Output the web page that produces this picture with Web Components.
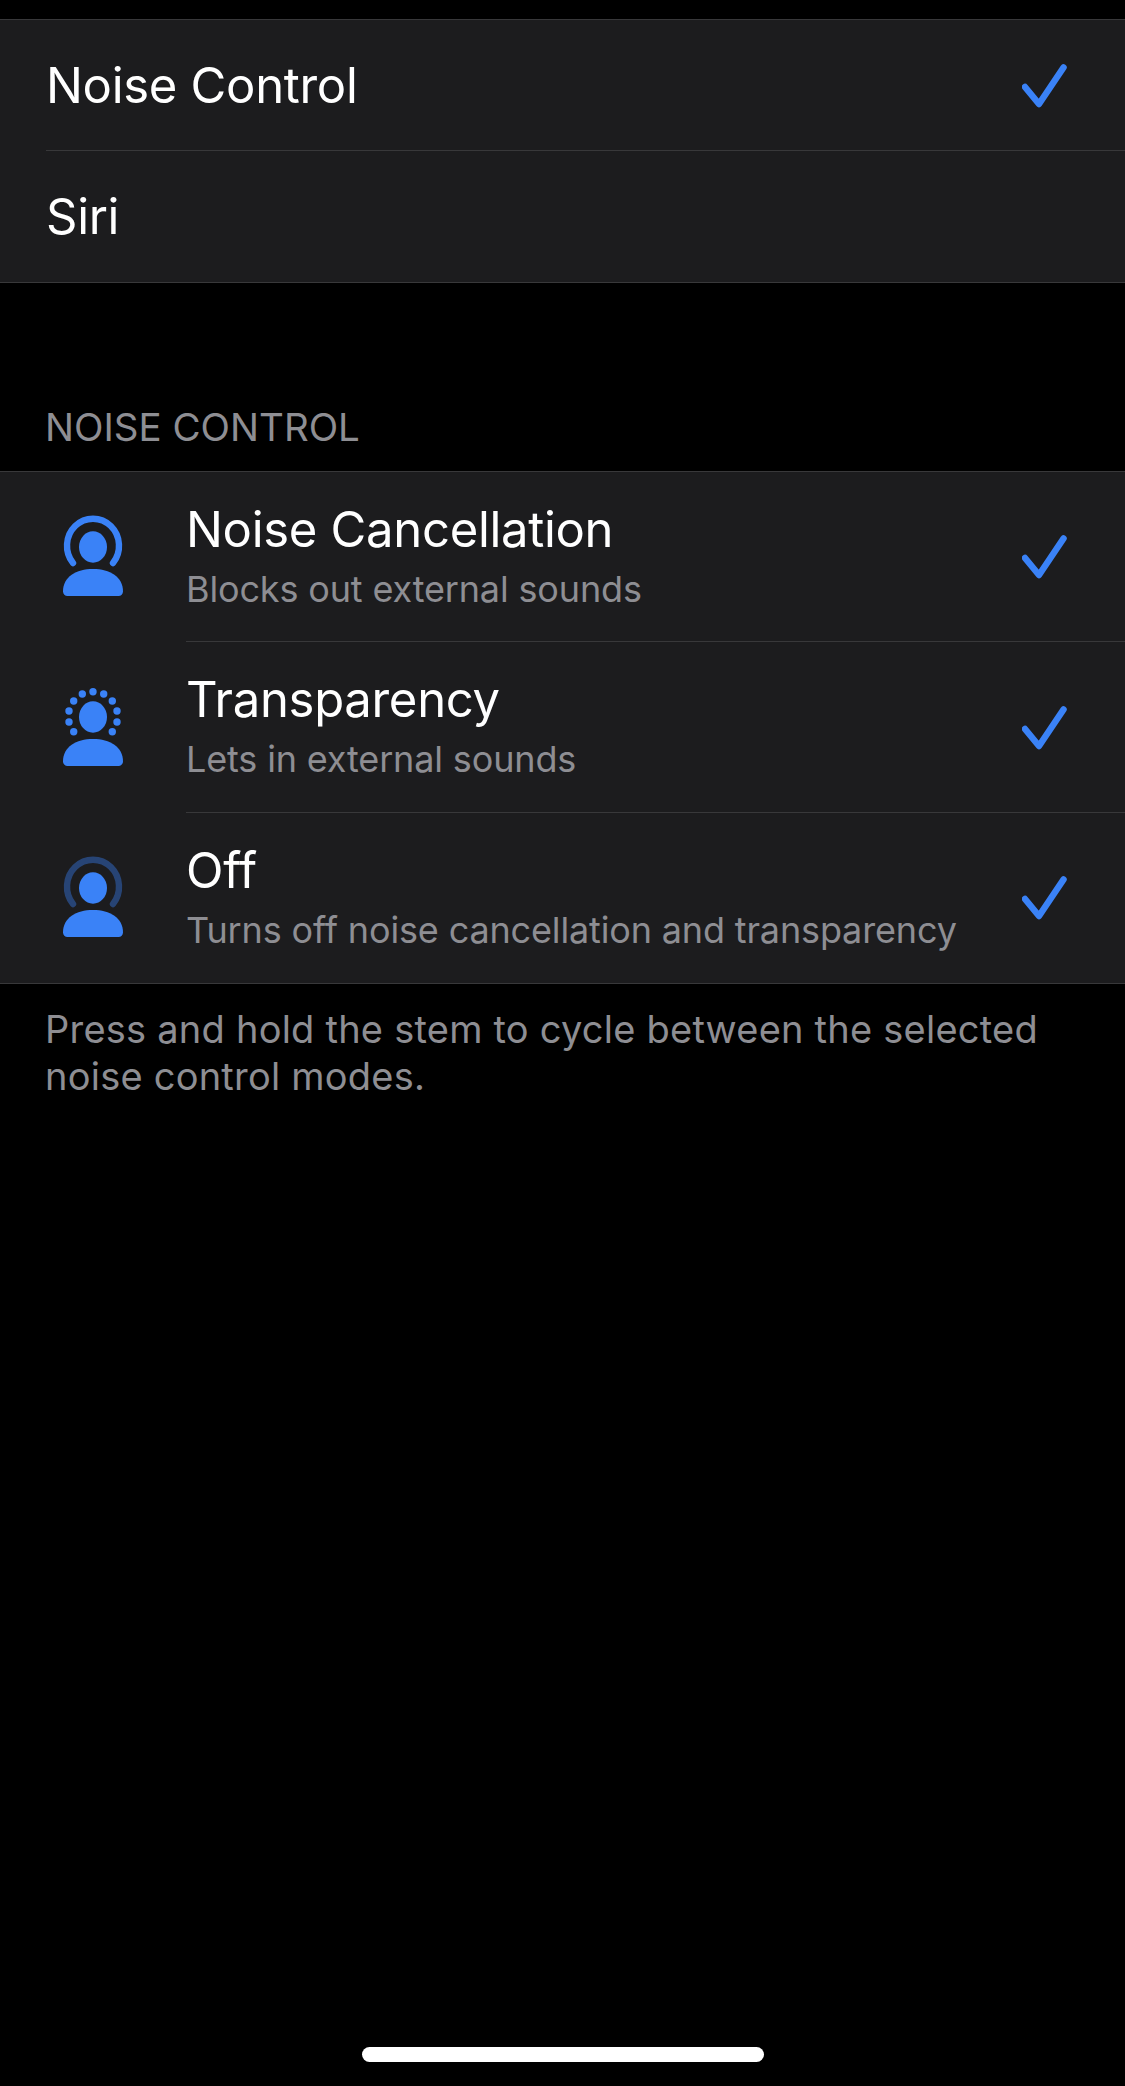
<!DOCTYPE html>
<html>
<head>
<meta charset="utf-8">
<title>Noise Control</title>
<style>
  html, body { margin: 0; background: #000; }
  body { font-family: Inter, "Liberation Sans", sans-serif; color: #fff; overflow: hidden; }
  settings-page { height: 2086px; }
</style>
</head>
<body>
<settings-page>
  <settings-group>
    <settings-row inset="46" height="131" checked>Noise Control</settings-row>
    <settings-row inset="46" height="131" last>Siri</settings-row>
  </settings-group>
  <section-header>NOISE CONTROL</section-header>
  <settings-group>
    <settings-row inset="186" height="170" icon="cancel" sub="Blocks out external sounds" checked>Noise Cancellation</settings-row>
    <settings-row inset="186" height="171" icon="transparency" sub="Lets in external sounds" checked>Transparency</settings-row>
    <settings-row inset="186" height="170" icon="off" sub="Turns off noise cancellation and transparency" checked last>Off</settings-row>
  </settings-group>
  <section-footer>Press and hold the stem to cycle between the selected noise control modes.</section-footer>
</settings-page>

<script>
  const BLUE = '#3a82f7';

  class SettingsPage extends HTMLElement {
    constructor() {
      super();
      this.attachShadow({mode: 'open'}).innerHTML = `
        <style>
          :host { display: flex; flex-direction: column; padding-top: 19px; box-sizing: border-box; }
          .home { margin: auto auto 24px; width: 402px; height: 15px; border-radius: 8px; background: #fff; }
        </style>
        <slot></slot>
        <div class="home"></div>
      `;
    }
  }

  class SettingsGroup extends HTMLElement {
    constructor() {
      super();
      this.attachShadow({mode: 'open'}).innerHTML = `
        <style>
          :host { display: block; background: #1c1c1e; border-top: 1px solid #38383a; border-bottom: 1px solid #38383a; }
        </style>
        <slot></slot>
      `;
    }
  }

  class NcIcon extends HTMLElement {
    get arc() {
      const mode = this.getAttribute('mode');
      if (mode === 'transparency') {
        const dots = [[30, 9.7], [19.3, 12], [40.7, 12], [10.7, 19], [49.3, 19], [6, 29], [54, 29], [6, 40], [54, 40], [10.7, 49.7], [49.3, 49.7]];
        return dots.map(([x, y]) => `<circle cx="${x}" cy="${y}" r="3.7"/>`).join('');
      }
      const opacity = mode === 'off' ? ' stroke-opacity="0.4"' : '';
      return `<path d="M10 51 A26 27 0 1 1 50 51" fill="none" stroke="${BLUE}" stroke-width="6.4" stroke-linecap="round"${opacity}/>`;
    }

    constructor() {
      super();
      this.attachShadow({mode: 'open'}).innerHTML = `
        <style>
          :host { display: block; width: 60px; height: 90px; }
          svg { display: block; }
        </style>
        <svg width="60" height="90" viewBox="0 0 60 90" fill="${BLUE}">
          ${this.arc}
          <ellipse cx="30" cy="35" rx="14" ry="15.7"/>
          <path d="M0 79.5 C0 65 13 57 30 57 C47 57 60 65 60 79.5 C60 82 58 84 55.5 84 L4.5 84 C2 84 0 82 0 79.5 Z"/>
        </svg>
      `;
    }
  }

  class SettingsRow extends HTMLElement {
    constructor() {
      super();
      const inset = this.getAttribute('inset');
      const icon = this.getAttribute('icon');
      const sub = this.getAttribute('sub');
      const check = this.hasAttribute('checked')
        ? `<svg class="check" width="46" height="46" viewBox="0 0 46 46"><path d="M3 25 L17 42 L41.5 5.5" fill="none" stroke="${BLUE}" stroke-width="6.5" stroke-linecap="round" stroke-linejoin="round"/></svg>`
        : '';
      this.attachShadow({mode: 'open'}).innerHTML = `
        <style>
          :host { display: block; }
          .row { position: relative; display: flex; align-items: center; height: ${this.getAttribute('height')}px; box-sizing: border-box; padding-left: ${icon ? 63 : inset}px; }
          .sep { position: absolute; left: ${inset}px; right: 0; bottom: 0; height: 1px; background: #38383a; }
          :host([last]) .sep { display: none; }
          nc-icon { margin-right: 63px; margin-top: -1px; }
          .text { flex: 1; min-width: 0; }
          .text.two { padding-bottom: 3px; }
          .title { font-size: 49px; line-height: 60px; letter-spacing: -0.3px; color: #fff; }
          .sub { font-size: 36px; line-height: 46px; letter-spacing: -0.15px; color: #8e8e93; margin-top: 6px; }
          .check { margin-right: 57px; margin-top: -2px; flex: none; }
        </style>
        <div class="row">
          ${icon ? `<nc-icon mode="${icon}"></nc-icon>` : ''}
          <div class="text ${sub ? 'two' : ''}">
            <div class="title"><slot></slot></div>
            ${sub ? `<div class="sub">${sub}</div>` : ''}
          </div>
          ${check}
          <div class="sep"></div>
        </div>
      `;
    }
  }

  class SectionHeader extends HTMLElement {
    constructor() {
      super();
      this.attachShadow({mode: 'open'}).innerHTML = `
        <style>
          :host { display: block; padding: 121px 45px 21px; font-size: 38.5px; line-height: 46px; color: #8e8e93; }
        </style>
        <slot></slot>
      `;
    }
  }

  class SectionFooter extends HTMLElement {
    constructor() {
      super();
      this.attachShadow({mode: 'open'}).innerHTML = `
        <style>
          :host { display: block; padding: 22px 45px 0; font-size: 38px; line-height: 47px; letter-spacing: 0.23px; color: #8e8e93; }
        </style>
        <slot></slot>
      `;
    }
  }

  customElements.define('nc-icon', NcIcon);
  customElements.define('settings-page', SettingsPage);
  customElements.define('settings-group', SettingsGroup);
  customElements.define('settings-row', SettingsRow);
  customElements.define('section-header', SectionHeader);
  customElements.define('section-footer', SectionFooter);
</script>
</body>
</html>
